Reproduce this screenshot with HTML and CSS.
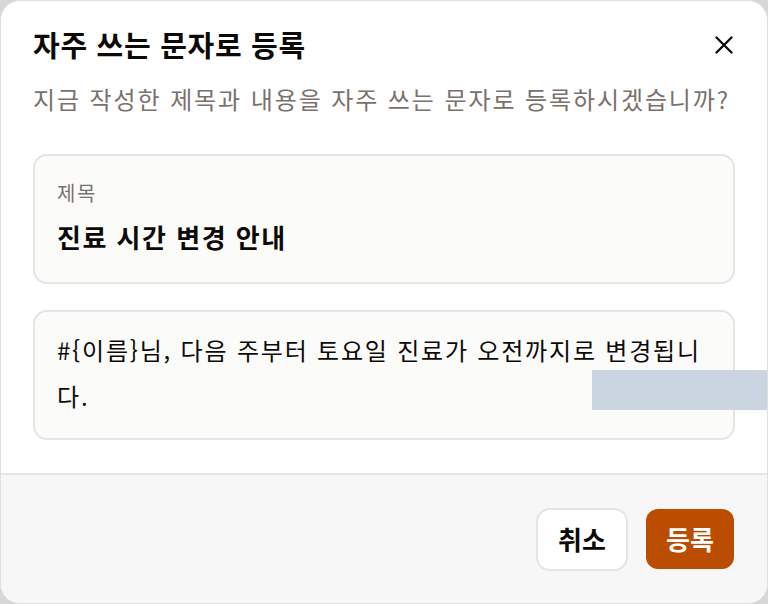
FILE: index.html
```html
<!DOCTYPE html>
<html lang="ko">
<head>
<meta charset="utf-8">
<link rel="stylesheet" href="styles.css">
</head>
<body>
<div class="modal">
  <div class="modal-body">
    <div class="head">
      <h1 class="title">자주 쓰는 문자로 등록</h1>
      <button class="close" aria-label="닫기">
        <svg width="18" height="18" viewBox="0 0 18 18"><path d="M1.5 1.5L16.5 16.5M16.5 1.5L1.5 16.5" stroke="#0c0a09" stroke-width="2.3" stroke-linecap="round"/></svg>
      </button>
    </div>
    <p class="desc">지금 작성한 제목과 내용을 자주 쓰는 문자로 등록하시겠습니까?</p>
    <div class="card card-title">
      <div class="label">제목</div>
      <div class="value">진료 시간 변경 안내</div>
    </div>
    <div class="card card-msg">
      <div class="msg">#{이름}님, 다음 주부터 토요일 진료가 오전까지로 변경됩니다.</div>
    </div>
  </div>
  <div class="footer">
    <button class="btn btn-cancel">취소</button>
    <button class="btn btn-primary">등록</button>
  </div>
  <div class="overlay-bar"></div>
</div>
</body>
</html>
```

FILE: styles.css
```css
* { box-sizing: border-box; }
html, body { margin: 0; padding: 0; }
body {
  width: 768px;
  height: 604px;
  background: #d9d7d6;
  font-family: "Noto Sans CJK KR", "Noto Sans", sans-serif;
  overflow: hidden;
}
.modal {
  position: relative;
  width: 768px;
  height: 604px;
  background: #ffffff;
  border: 1px solid #e2dfdd;
  border-radius: 20px;
  overflow: hidden;
  display: flex;
  flex-direction: column;
}
.modal-body {
  flex: 1;
  padding: 26px 32px 0 32px;
}
.head {
  display: flex;
  justify-content: space-between;
  align-items: center;
  height: 34px;
}
.title {
  margin: 0;
  font-size: 29px;
  font-weight: 700;
  letter-spacing: 0.7px;
  color: #0c0a09;
  line-height: 34px;
}
.close {
  border: 0;
  background: none;
  padding: 0;
  width: 18px;
  height: 18px;
  margin-right: 2px;
  margin-top: 1px;
  display: flex;
}
.desc {
  margin: 22px 0 0 0;
  font-size: 24px;
  letter-spacing: 1.9px;
  line-height: 32px;
  color: #7a716c;
  white-space: nowrap;
}
.card {
  background: #fbfbfa;
  border: 2px solid #e7e5e4;
  border-radius: 14px;
  padding: 0 22px;
  height: 130px;
}
.card-title {
  margin-top: 39px;
  padding-top: 24px;
}
.card-msg {
  margin-top: 26px;
  padding-top: 15px;
}
.label {
  font-size: 20px;
  letter-spacing: 1.5px;
  line-height: 26px;
  color: #7a716c;
}
.value {
  margin-top: 16px;
  font-size: 26px;
  font-weight: 700;
  letter-spacing: 1.5px;
  line-height: 30px;
  color: #0c0a09;
}
.msg {
  font-size: 24px;
  letter-spacing: 1.8px;
  line-height: 46px;
  color: #0c0a09;
}
.footer {
  height: 130px;
  flex: none;
  background: #f7f7f7;
  border-top: 2px solid #e7e5e4;
  display: flex;
  justify-content: flex-end;
  align-items: center;
  gap: 18px;
  padding: 0 33px 0 0;
}
.btn {
  font-family: inherit;
  font-size: 26px;
  font-weight: 700;
  border-radius: 13px;
  padding: 0;
  cursor: pointer;
  line-height: 1;
}
.btn-cancel {
  background: #ffffff;
  color: #0c0a09;
  border: 2px solid #e7e5e4;
  width: 92px;
  height: 63px;
  border-radius: 14px;
}
.btn-primary {
  background: #bb4d00;
  color: #ffffff;
  border: 0;
  width: 88px;
  height: 60px;
  border-radius: 12px;
}
.overlay-bar {
  position: absolute;
  left: 591px;
  top: 369px;
  width: 177px;
  height: 40px;
  background: #cbd5e1;
}
```
